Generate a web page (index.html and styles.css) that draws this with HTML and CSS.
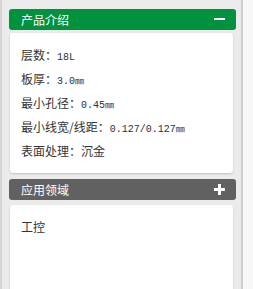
FILE: index.html
```html
<!DOCTYPE html>
<html>
<head>
<meta charset="utf-8">
<link rel="stylesheet" href="styles.css">
</head>
<body>
<div class="side">
  <div class="head green">
    <span class="title">产品介绍</span>
    <span class="icon minus"></span>
  </div>
  <div class="box">
    <div class="row">层数：<span class="val">18L</span></div>
    <div class="row">板厚：<span class="val">3.0<span class="mm">㎜</span></span></div>
    <div class="row">最小孔径：<span class="val">0.45<span class="mm">㎜</span></span></div>
    <div class="row">最小线宽/线距：<span class="val">0.127/0.127<span class="mm">㎜</span></span></div>
    <div class="row">表面处理：沉金</div>
  </div>
  <div class="head gray">
    <span class="title">应用领域</span>
    <span class="icon plus"></span>
  </div>
  <div class="box last">
    <div class="row">工控</div>
  </div>
</div>
</body>
</html>
```

FILE: styles.css
```css
html, body {
  margin: 0;
  padding: 0;
  background: #f7f7f7;
  height: 100%;
  overflow: hidden;
}
.side {
  height: 289px;
  overflow: hidden;
  background: #ebebeb;
  border-left: 2px solid #d6d6d6;
  border-right: 2px solid #cfcfcf;
  padding: 9px 0 0 7px;
  box-sizing: border-box;
  width: 243px;
  font-family: "Noto Sans CJK SC", sans-serif;
}
.head {
  width: 227px;
  height: 21px;
  border-radius: 3px;
  display: flex;
  align-items: center;
  justify-content: space-between;
  padding: 0 11px 0 12px;
  box-sizing: border-box;
  color: #fff;
  font-size: 12px;
  line-height: 21px;
}
.green { background: #00923f; margin-bottom: 3px; }
.gray { background: #616161; margin-bottom: 5px; }
.title { display: block; }
.icon {
  position: relative;
  width: 11px;
  height: 11px;
  display: block;
}
.icon::before {
  content: "";
  position: absolute;
  left: 0;
  top: 4px;
  width: 11px;
  height: 2px;
  background: #fff;
}
.plus::after {
  content: "";
  position: absolute;
  left: 4px;
  top: 0;
  width: 3px;
  height: 11px;
  background: #fff;
}
.plus::before { height: 3px; }
.box {
  width: 223px;
  margin-left: 1px;
  background: #fff;
  border-radius: 3px;
  box-shadow: 0 1px 2px rgba(0,0,0,0.18);
  padding: 10px 0 10px 11px;
  box-sizing: border-box;
  margin-bottom: 6px;
  color: #333;
  font-size: 12px;
}
.box.last { height: 90px; }
.row {
  line-height: 24px;
  height: 24px;
  white-space: nowrap;
}
.val {
  font-family: "Liberation Mono", monospace;
  font-size: 10px;
  color: #2b2f40;
}
.mm {
  font-family: "Noto Sans CJK SC", sans-serif;
  font-size: 9px;
  letter-spacing: -1px;
}
```
